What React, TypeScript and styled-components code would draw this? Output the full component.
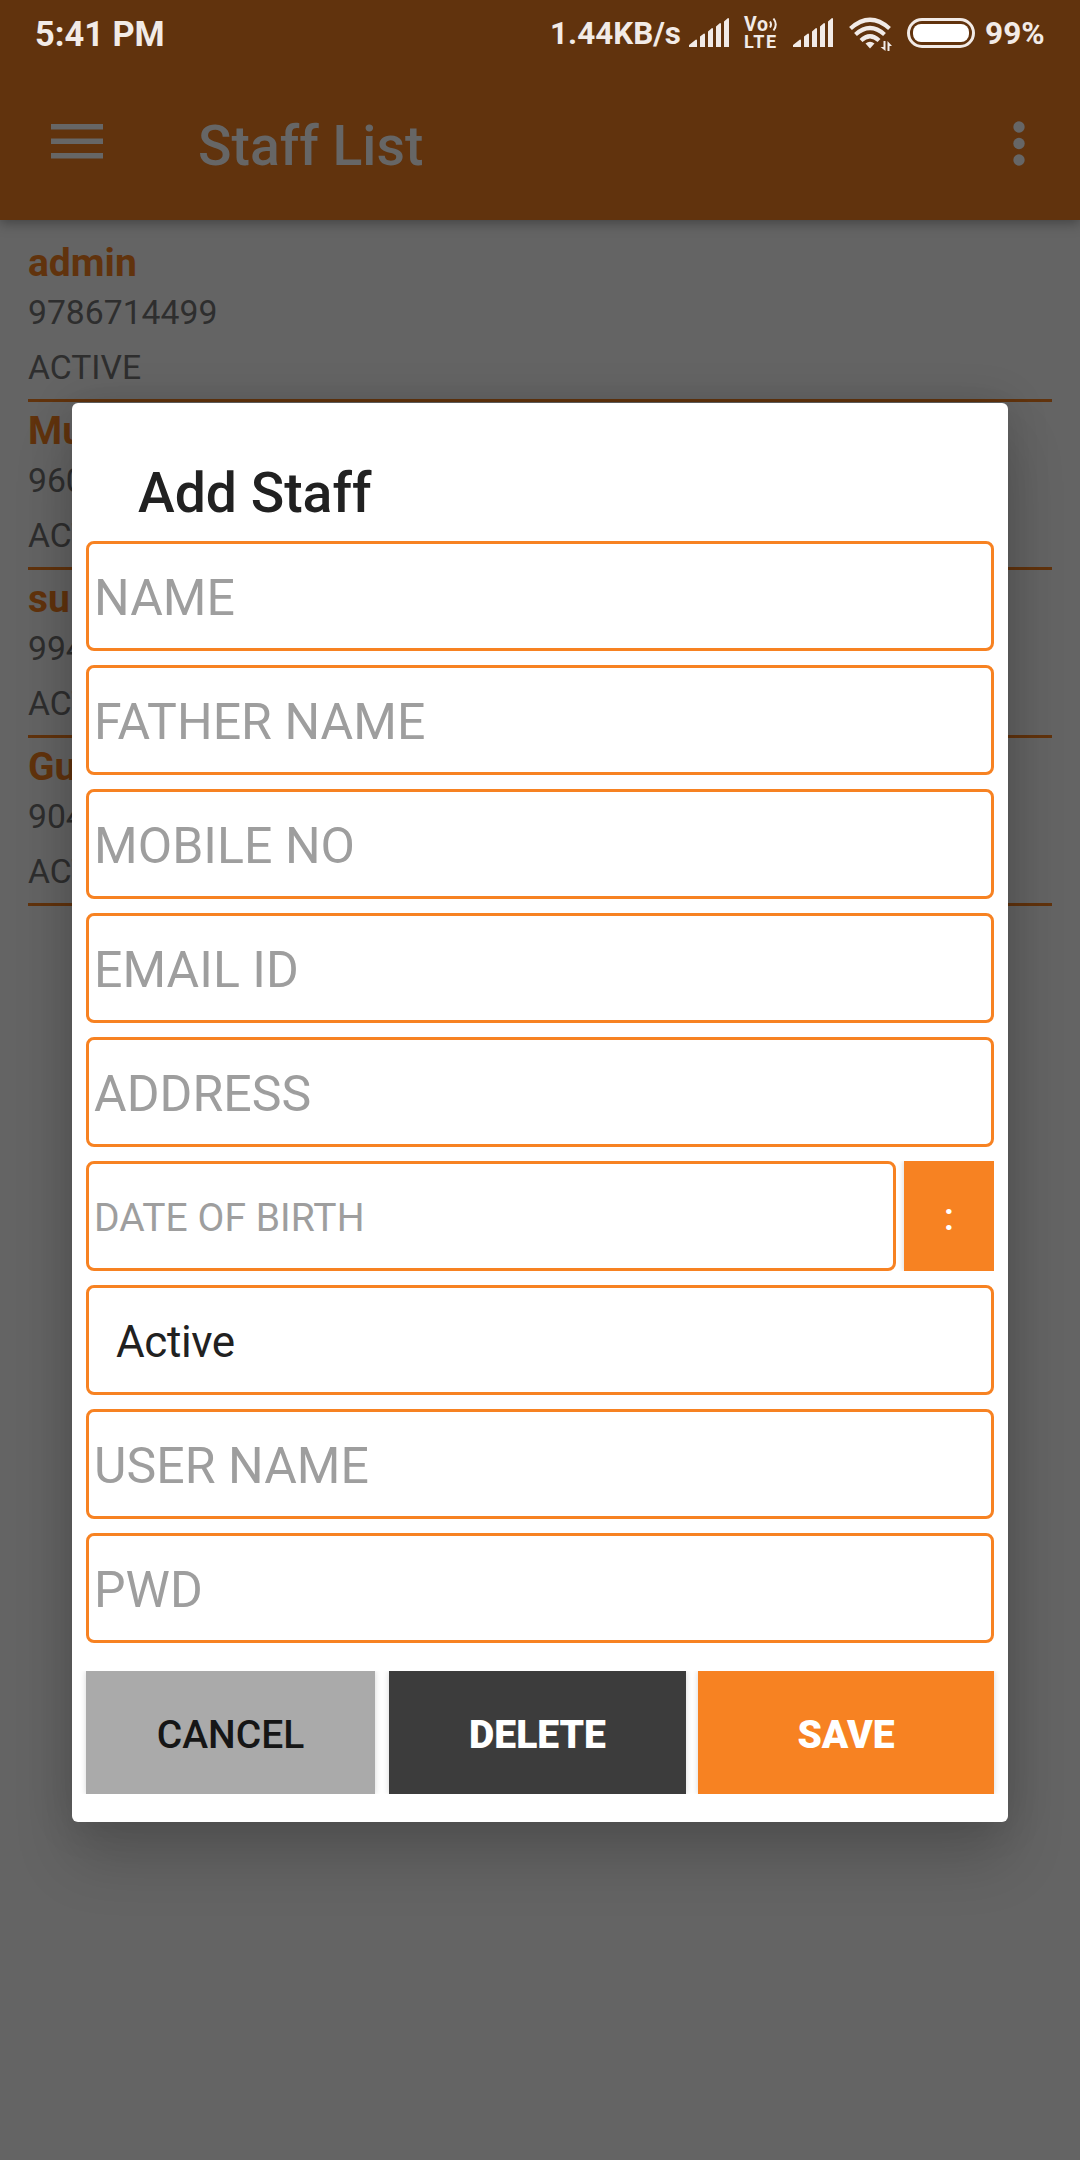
import React from "react";
import styled, { createGlobalStyle } from "styled-components";

const ORANGE = "#f78222";
const LIGHT = "#f2ebe7";

const GlobalStyle = createGlobalStyle`
  * { box-sizing: border-box; }
  html, body { margin: 0; padding: 0; }
  body { font-family: Roboto, "Noto Sans", sans-serif; background: #646464; }
`;

const Screen = styled.div`
  position: relative;
  width: 1080px;
  height: 2160px;
  overflow: hidden;
  background: #646464;
`;

const Header = styled.header`
  height: 220px;
  background: #61330d;
  box-shadow: 0 3px 12px rgba(0, 0, 0, 0.34);
`;

const StatusBar = styled.div`
  display: flex;
  align-items: center;
  height: 66px;
  padding: 0 35px;
  color: ${LIGHT};
`;

const Clock = styled.span`
  flex: 1;
  font-size: 34.4px;
  font-weight: 700;
  line-height: 68px;
  padding-top: 2px;
`;

const StatusText = styled.span<{ $size: number; $gap: number; $width?: number }>`
  width: ${(p) => (p.$width ? `${p.$width}px` : "auto")};
  font-size: ${(p) => p.$size}px;
  font-weight: 700;
  line-height: 68px;
  padding-top: 2px;
  margin-right: ${(p) => p.$gap}px;
  white-space: nowrap;
`;

const StatusIcon = styled.svg<{ $gap: number; $top?: number }>`
  display: block;
  flex: none;
  margin-top: ${(p) => p.$top ?? 0}px;
  margin-right: ${(p) => p.$gap}px;
`;

const VoLte = styled.div`
  display: grid;
  grid-template-rows: 16px 17px;
  width: 34px;
  margin-right: 15px;
  font-size: 18px;
  font-weight: 700;
  line-height: 17px;
  letter-spacing: 1.6px;
`;

const VoRow = styled.div`
  display: flex;
  font-size: 19.5px;
  line-height: 16px;
  letter-spacing: 0.8px;
`;

const AppBar = styled.div`
  display: flex;
  align-items: flex-start;
  height: 154px;
  padding: 55px 52px 0 51px;
`;

const MenuIcon = styled.svg`
  display: block;
  margin: 3px 95px 0 0;
`;

const PageTitle = styled.h1`
  flex: 1;
  margin: -8px 0 0;
  color: #666;
  font-size: 55.3px;
  font-weight: 500;
  line-height: 68px;
`;

const List = styled.ul`
  margin: 0;
  padding: 14px 28px 0;
  list-style: none;
`;

const StaffRow = styled.li`
  display: flex;
  flex-direction: column;
  height: 168px;
  border-bottom: 3px solid #61330d;
`;

const StaffName = styled.span`
  height: 55px;
  color: #61330d;
  font-size: 39px;
  font-weight: 700;
  line-height: 59px;
`;

const StaffDetail = styled.span`
  height: 55px;
  color: #2e2e2e;
  font-size: 33.7px;
  line-height: 47px;
`;

const Overlay = styled.div`
  position: absolute;
  inset: 0;
  padding: 403px 72px 0;
`;

const Dialog = styled.form`
  display: flex;
  flex-direction: column;
  gap: 14px;
  height: 1419px;
  padding: 0 14px;
  border-radius: 6px;
  background: #fff;
  box-shadow: 0 38px 60px rgba(0, 0, 0, 0.16), 0 0 44px rgba(0, 0, 0, 0.14);
`;

const DialogTitle = styled.h2`
  height: 124px;
  margin: 0;
  padding: 56px 0 0 52px;
  color: #212121;
  font-size: 55.3px;
  font-weight: 500;
  line-height: 70px;
`;

const FieldRow = styled.div`
  display: flex;
  gap: 8px;
`;

const Field = styled.div<{ $size?: number; $value?: boolean }>`
  flex: 1;
  height: 110px;
  padding-left: ${(p) => (p.$value ? 27 : 5)}px;
  border: 3px solid ${ORANGE};
  border-radius: 8px;
  color: ${(p) => (p.$value ? "#212121" : "#9e9e9e")};
  font-size: ${(p) => p.$size ?? 50}px;
  letter-spacing: ${(p) => (p.$value ? "-0.4px" : "0.05px")};
  line-height: 108px;
  white-space: nowrap;
`;

const FieldFlat = styled(Field)`
  flex: none;
`;

const DateButton = styled.button`
  width: 90px;
  height: 110px;
  padding: 2px 0 0;
  border: 0;
  background: ${ORANGE};
  box-shadow: -2px 0 4px rgba(0, 0, 0, 0.1);
  clip-path: inset(0 0 0 -8px);
  color: #fff;
  font: 500 39px/108px Roboto, sans-serif;
`;

const Actions = styled.div`
  display: grid;
  grid-template-columns: 289px 14px 297px 12px 296px;
  height: 123px;
  margin-top: 14px;

  & > :nth-child(2) {
    grid-column: 3;
  }

  & > :nth-child(3) {
    grid-column: 5;
  }
`;

const ActionButton = styled.button<{ $bg: string; $fg: string; $weight: number }>`
  padding: 5px 0 0;
  border: 0;
  background: ${(p) => p.$bg};
  color: ${(p) => p.$fg};
  box-shadow: 0 0 6px rgba(0, 0, 0, 0.16);
  clip-path: inset(0 -8px);
  font: ${(p) => p.$weight} 39px/46px Roboto, sans-serif;
`;

const Signal = ({ gap }: { gap: number }) => (
  <StatusIcon $gap={gap} width="41" height="30" viewBox="0 0 41 30" fill={LIGHT}>
    <path d="M0 29v-2l7-5.500q1 0 1 1v6.500zM11 29V18.500l4-3q1 0 1 1v12.500zM19 29V13.500l4-3.500q1 0 1 1v18zM27 29V8.500l4-3.500q1 0 1 1v23zM35 29V3.500l4-3.500q1 0 1 1v28z" />
  </StatusIcon>
);

const staff = [
  { name: "admin", phone: "9786714499" },
  { name: "Mu", phone: "960" },
  { name: "su", phone: "994" },
  { name: "Gu", phone: "904" },
];

export default function App() {
  return (
    <Screen>
      <GlobalStyle />
      <Header>
        <StatusBar>
          <Clock>5:41 PM</Clock>
          <StatusText $size={31.4} $gap={8}>1.44KB/s</StatusText>
          <Signal gap={14} />
          <VoLte>
            <VoRow>
              Vo
              <svg width="9" height="15" viewBox="0 0 9 15" fill="none" stroke={LIGHT} strokeWidth="2">
                <path d="M1 4.500q2 3 0 6M4.500 1.500q4.500 6 0 12" />
              </svg>
            </VoRow>
            <span>LTE</span>
          </VoLte>
          <Signal gap={15} />
          <StatusIcon $gap={15} $top={2} width="43" height="34" viewBox="0 0 43 34" fill="none" stroke={LIGHT} strokeWidth="4.200">
            <path d="M1.500 11.500Q21 -6 40.500 11.500M6.500 17.500Q21 4.500 35.500 17.500M12 23.500Q21 15 30 23.500" />
            <path d="M16.500 26.500Q21 23 25.500 26.500L21 31.500z" fill={LIGHT} stroke="none" />
            <path d="M36.500 24v10l-5-4h3v-6zM38.500 34V24l4.500 5h-2.500v5z" fill={LIGHT} stroke="none" />
          </StatusIcon>
          <StatusIcon $gap={10} width="68" height="30" viewBox="0 0 68 30">
            <rect x="1.500" y="1.500" width="65" height="27" rx="13.500" fill="none" stroke={LIGHT} strokeWidth="3" />
            <rect x="6" y="6" width="56" height="18" rx="8" fill="#fff" />
          </StatusIcon>
          <StatusText $size={31.6} $gap={0} $width={60}>99%</StatusText>
        </StatusBar>
        <AppBar>
          <MenuIcon width="52" height="35" viewBox="0 0 52 35" fill="#666">
            <path d="M0 0h52v5.500H0zM0 14.500h52V20H0zM0 29h52v5.500H0z" />
          </MenuIcon>
          <PageTitle>Staff List</PageTitle>
          <svg width="18" height="46" viewBox="0 0 18 46" fill="#666">
            <circle cx="9" cy="6" r="5.700" />
            <circle cx="9" cy="22.500" r="5.700" />
            <circle cx="9" cy="39" r="5.700" />
          </svg>
        </AppBar>
      </Header>
      <List>
        {staff.map((s) => (
          <StaffRow key={s.name}>
            <StaffName>{s.name}</StaffName>
            <StaffDetail>{s.phone}</StaffDetail>
            <StaffDetail>ACTIVE</StaffDetail>
          </StaffRow>
        ))}
      </List>
      <Overlay>
        <Dialog>
          <DialogTitle>Add Staff</DialogTitle>
          <FieldFlat>NAME</FieldFlat>
          <FieldFlat>FATHER NAME</FieldFlat>
          <FieldFlat>MOBILE NO</FieldFlat>
          <FieldFlat>EMAIL ID</FieldFlat>
          <FieldFlat>ADDRESS</FieldFlat>
          <FieldRow>
            <Field $size={39}>DATE OF BIRTH</Field>
            <DateButton type="button">:</DateButton>
          </FieldRow>
          <FieldFlat $size={44} $value>Active</FieldFlat>
          <FieldFlat>USER NAME</FieldFlat>
          <FieldFlat>PWD</FieldFlat>
          <Actions>
            <ActionButton type="button" $bg="#aaaaaa" $fg="#161616" $weight={500}>CANCEL</ActionButton>
            <ActionButton type="button" $bg="#3c3c3c" $fg="#ffffff" $weight={900}>DELETE</ActionButton>
            <ActionButton type="button" $bg={ORANGE} $fg="#ffffff" $weight={900}>SAVE</ActionButton>
          </Actions>
        </Dialog>
      </Overlay>
    </Screen>
  );
}
